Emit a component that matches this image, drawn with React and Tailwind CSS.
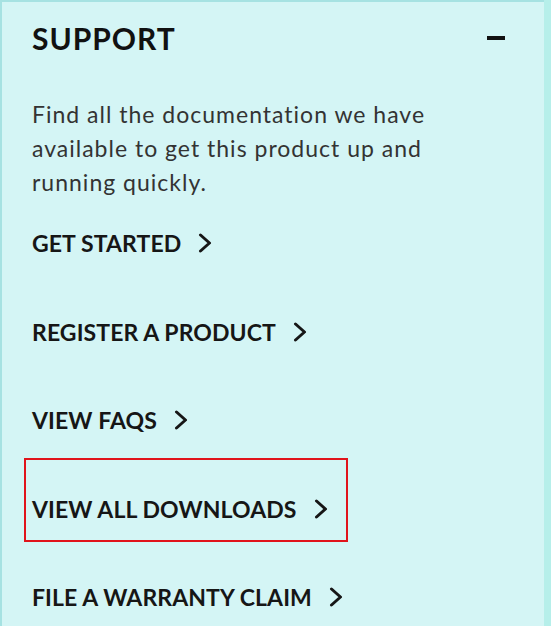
const links = [
  { label: 'GET STARTED' },
  { label: 'REGISTER A PRODUCT' },
  { label: 'VIEW FAQS' },
  { label: 'VIEW ALL DOWNLOADS', marked: true },
  { label: 'FILE A WARRANTY CLAIM' },
];

function Chevron() {
  return (
    <svg width="14" height="20" viewBox="0 0 14 20" fill="none" className="shrink-0">
      <path d="M2.5 2 L11.5 10 L2.5 18" stroke="#161616" strokeWidth="3" strokeLinecap="round" strokeLinejoin="round" />
    </svg>
  );
}

export default function App() {
  return (
    <div className="flex h-[626px] w-[551px] overflow-hidden bg-[#b6efea] font-['Lato',sans-serif]">
      <section className="h-full w-[544px] border-l-2 border-t-2 border-[#a6e2e2] bg-[#d4f5f5] pl-[30px] pr-[39px] pt-[18px]">
        <div className="flex h-[36px] items-center justify-between">
          <h2 className="text-[30px] font-bold leading-[36px] tracking-[1px] text-[#111]">SUPPORT</h2>
          <span className="block h-[4px] w-[18px] bg-[#111]" />
        </div>

        <p className="mt-[41px] w-[440px] text-[23px] leading-[34px] tracking-[1px] text-[#333]">
          Find all the documentation we have available to get this product up and running quickly.
        </p>

        <ul>
          {links.map((link) => (
            <li key={link.label} className="flex h-[88.5px] items-center">
              <a href="#" className="relative flex items-center gap-[17px] text-[23px] font-bold tracking-[0.1px] text-[#161616]">
                {link.label}
                <Chevron />
                {link.marked && (
                  <span className="absolute -bottom-[16px] -left-[8px] -right-[20px] -top-[34px] border-2 border-[#e0141b]" />
                )}
              </a>
            </li>
          ))}
        </ul>
      </section>
    </div>
  );
}
